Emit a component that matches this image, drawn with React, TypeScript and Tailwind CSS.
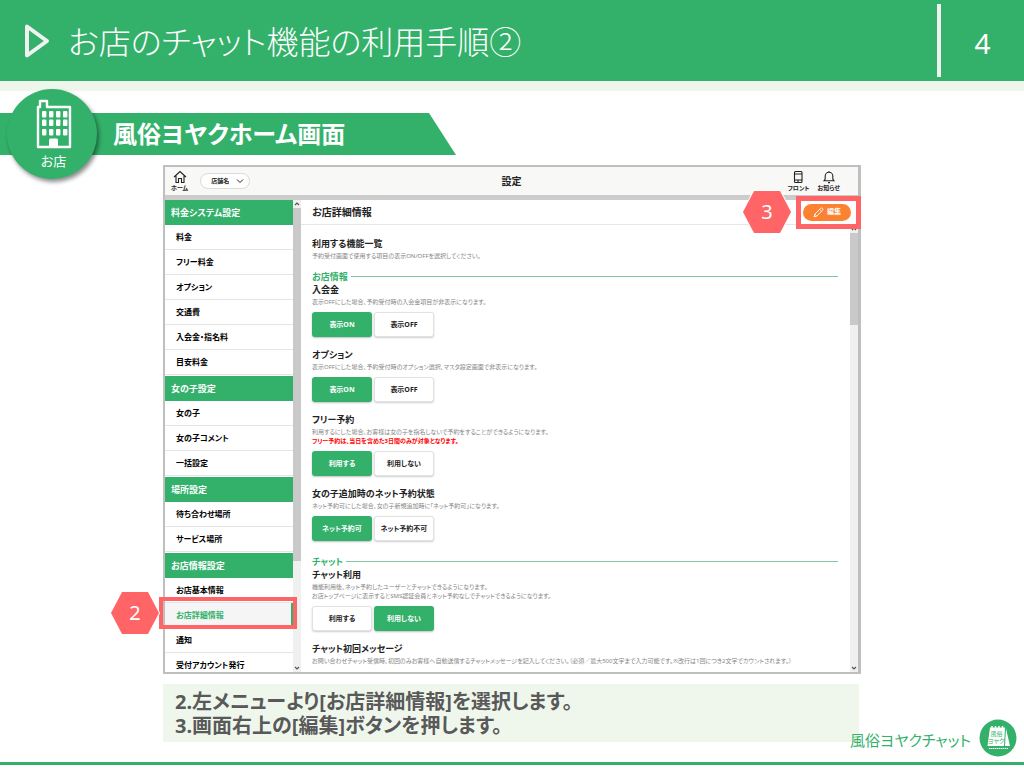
import React from "react";

const DISPLAY = "font-['Noto_Sans','Noto_Sans_CJK_JP',sans-serif] [font-feature-settings:'palt']";

type Group = { title: string; items: string[] };

const MENU: Group[] = [
  { title: "料金システム設定", items: ["料金", "フリー料金", "オプション", "交通費", "入会金・指名料", "目安料金"] },
  { title: "女の子設定", items: ["女の子", "女の子コメント", "一括設定"] },
  { title: "場所設定", items: ["待ち合わせ場所", "サービス場所"] },
  { title: "お店情報設定", items: ["お店基本情報", "お店詳細情報", "通知", "受付アカウント発行"] },
];

function Sidebar() {
  return (
    <nav className="w-[128px] shrink-0 bg-white">
      {MENU.map((g) => (
        <section key={g.title} className="pb-px">
          <h3 className="flex h-[25px] items-center bg-[#33b16b] pl-[6px] text-[9px] font-bold text-white">{g.title}</h3>
          <ul>
            {g.items.map((item) => {
              const active = item === "お店詳細情報";
              return (
                <li key={item} className="border-b border-[#e4e4e4]">
                  <a
                    href="#"
                    className={
                      active
                        ? "flex h-6 items-center border-r-2 border-[#33b16b] bg-[#f5f5f5] pl-[11px] text-[8px] font-bold text-[#33b16b]"
                        : "flex h-6 items-center pl-[11px] text-[8px] font-bold text-black"
                    }
                  >
                    {item}
                  </a>
                </li>
              );
            })}
          </ul>
        </section>
      ))}
    </nav>
  );
}

function Arrow({ up }: { up?: boolean }) {
  return (
    <svg viewBox="0 0 8 8" className="h-2 w-2 shrink-0" fill="none" stroke="#555" strokeWidth="1.2">
      <path d={up ? "M2 5 4 3l2 2" : "M2 3l2 2 2-2"} />
    </svg>
  );
}

function Choice({ options, selected }: { options: string[]; selected: number }) {
  return (
    <div className="mt-[5px] flex gap-[2px]">
      {options.map((o, i) => (
        <button
          key={o}
          type="button"
          className={
            i === selected
              ? "h-[25px] w-[60px] rounded-[3px] bg-[#33b16b] pt-px text-[7px] font-bold text-white shadow-[0_1px_2px_rgba(0,0,0,0.25)]"
              : "h-[25px] w-[60px] rounded-[3px] border border-[#e2e2e2] bg-white pt-px text-[7px] font-bold text-[#222] shadow-[0_1px_2px_rgba(0,0,0,0.2)]"
          }
        >
          {o}
        </button>
      ))}
    </div>
  );
}

function Setting(props: {
  title: string;
  notes: string[];
  warning?: string;
  options?: string[];
  selected?: number;
  first?: boolean;
}) {
  return (
    <section className={props.first ? "" : "mt-[11px]"}>
      <h4 className="text-[9px] leading-[13px] font-bold text-[#222]">{props.title}</h4>
      <div className="mt-[2px] text-[6px] leading-[9px] whitespace-nowrap text-[#858585]">
        {props.notes.map((n) => (
          <p key={n}>{n}</p>
        ))}
        {props.warning && <p className="font-bold text-[#ff0000]">{props.warning}</p>}
      </div>
      {props.options && <Choice options={props.options} selected={props.selected ?? 0} />}
    </section>
  );
}

function GroupTitle({ children }: { children: React.ReactNode }) {
  return (
    <div className="flex items-center gap-[3px]">
      <h3 className="text-[9px] leading-[13px] font-bold text-[#33b16b]">{children}</h3>
      <span className="h-px flex-1 bg-[#7fc8a2]" />
    </div>
  );
}

function Details() {
  return (
    <div className="min-w-0 flex-1 bg-white">
      <div className="flex h-[25px] items-center justify-between border-b border-[#e6e6e6] pr-[7px] pl-[11px]">
        <h2 className="text-[10px] font-bold text-[#222]">お店詳細情報</h2>
        <button
          type="button"
          className="flex h-[17px] w-12 items-center justify-center gap-[3px] rounded-full bg-[#fb8231] text-[7px] font-bold text-white"
        >
          <svg viewBox="0 0 12 12" className="h-[11px] w-[11px]" fill="none" stroke="white" strokeWidth="1">
            <path d="M1.2 10.8 2 7.8 8.3 1.5a1.3 1.3 0 0 1 2.1 2.1L4 10l-2.8.8ZM7.3 2.6l2 2M2 7.8 4 10" />
          </svg>
          編集
        </button>
      </div>
      <div className="flex">
        <div className="min-w-0 flex-1 pt-3 pr-[12px] pl-[11px]">
          <Setting first title="利用する機能一覧" notes={["予約受付画面で使用する項目の表示ON/OFFを選択してください。"]} />
          <div className="mt-[9px]">
            <GroupTitle>お店情報</GroupTitle>
            <Setting
              first
              title="入会金"
              notes={["表示OFFにした場合、予約受付時の入会金項目が非表示になります。"]}
              options={["表示ON", "表示OFF"]}
            />
            <Setting
              title="オプション"
              notes={["表示OFFにした場合、予約受付時のオプション選択、マスタ設定画面で非表示になります。"]}
              options={["表示ON", "表示OFF"]}
            />
            <Setting
              title="フリー予約"
              notes={["利用するにした場合、お客様は女の子を指名しないで予約をすることができるようになります。"]}
              warning="フリー予約は、当日を含めた3日間のみが対象となります。"
              options={["利用する", "利用しない"]}
            />
            <Setting
              title="女の子追加時のネット予約状態"
              notes={["ネット予約可にした場合、女の子新規追加時に「ネット予約可」になります。"]}
              options={["ネット予約可", "ネット予約不可"]}
            />
          </div>
          <div className="mt-[14px]">
            <GroupTitle>チャット</GroupTitle>
            <Setting
              first
              title="チャット利用"
              notes={[
                "機能利用後、ネット予約したユーザーとチャットできるようになります。",
                "お店トップページに表示するとSMS認証会員とネット予約なしでチャットできるようになります。",
              ]}
              options={["利用する", "利用しない"]}
              selected={1}
            />
            <Setting
              title="チャット初回メッセージ"
              notes={[
                "お問い合わせチャット受信時、初回のみお客様へ自動送信するチャットメッセージを記入してください。（必須／最大500文字まで入力可能です。※改行は1回につき2文字でカウントされます。）",
              ]}
            />
          </div>
        </div>
        <div className="flex h-[447px] w-2 shrink-0 flex-col justify-between bg-[#f0f0f0]">
          <div>
            <Arrow up />
            <div className="h-[92px] bg-[#c9c9c9]" />
          </div>
          <Arrow />
        </div>
      </div>
    </div>
  );
}

function AppBar() {
  return (
    <header className="grid h-[28px] grid-cols-3 items-center bg-[#f8f8f7] px-[6px] text-[6px] font-bold text-[#222]">
      <div className="flex items-center gap-3">
        <a href="#" className="flex flex-col items-center">
          <svg viewBox="0 0 14 14" className="h-[14px] w-[14px]" fill="none" stroke="#222" strokeWidth="1.1">
            <path d="M1 7 7 1.5 13 7M3 5.5V12.5H5.5V8.5H8.5V12.5H11V5.5" />
          </svg>
          <span className="leading-[8px]">ホーム</span>
        </a>
        <button
          type="button"
          className="flex h-4 w-[50px] items-center justify-between rounded-full border border-[#dcdcdc] bg-white pr-[5px] pl-[10px]"
        >
          店舗名
          <svg viewBox="0 0 8 6" className="h-[6px] w-2" fill="none" stroke="#222" strokeWidth="1">
            <path d="M1 1.5 4 4.5 7 1.5" />
          </svg>
        </button>
      </div>
      <h1 className="text-center text-[10px]">設定</h1>
      <div className="flex justify-end gap-[8px] pr-[12px]">
        <a href="#" className="flex flex-col items-center">
          <svg viewBox="0 0 12 14" className="h-[14px] w-3" fill="none" stroke="#222" strokeWidth="1.1">
            <rect x="2.5" y="1.5" width="7.5" height="11" rx="1" />
            <path d="M2.5 4H10M2.5 10H10M6 10v2.5" />
          </svg>
          <span className="leading-[8px]">フロント</span>
        </a>
        <a href="#" className="flex flex-col items-center">
          <svg viewBox="0 0 12 14" className="h-[14px] w-3" fill="none" stroke="#222" strokeWidth="1.1">
            <path d="M1 10.8h10L9.8 9V6a3.8 3.8 0 0 0-7.6 0v3L1 10.8ZM5 12.6h2M6 1v1.2" />
          </svg>
          <span className="leading-[8px]">お知らせ</span>
        </a>
      </div>
    </header>
  );
}

function Step({ n, className }: { n: number; className: string }) {
  return (
    <div className={`absolute flex h-[42px] w-12 items-center justify-center ${className}`}>
      <svg viewBox="0 0 48 42" className="absolute inset-0 h-full w-full overflow-visible">
        <path d="M11 0H37L48 21 37 42H11L0 21Z" fill="#ff6466" stroke="white" strokeWidth="2" paintOrder="stroke" />
      </svg>
      <span className="relative text-[20px] leading-none text-white">{n}</span>
    </div>
  );
}

function Building() {
  return (
    <svg viewBox="0 0 36 50" className="h-[50px] w-9" fill="none">
      <path d="M2 48V8H4V2H11V8H34V48Z" stroke="white" strokeWidth="2.4" strokeLinejoin="round" />
      <g fill="white">
        {[12, 20.5, 30].map((y) =>
          [6, 13, 20, 27].map((x) => <rect key={`${x}-${y}`} x={x} y={y} width="4.4" height="6.5" rx="1" />),
        )}
        <path d="M13 48v-7q0-1.500 1.500-1.500h6q1.500 0 1.500 1.500v7Z" />
      </g>
    </svg>
  );
}

export default function App() {
  return (
    <div className={`relative w-full overflow-hidden bg-white ${DISPLAY}`}>
      <header className="flex h-[81px] items-center bg-[#33b16b] text-white">
        <svg viewBox="0 0 26 36" className="ml-6 h-9 w-[26px]" fill="none">
          <path d="M3 3.500V32.500L23 18Z" stroke="#f1f1f1" strokeWidth="4" strokeLinejoin="round" />
        </svg>
        <h1 className="ml-[18px] flex-1 pt-[2px] text-[32px] leading-none font-light">お店のチャット機能の利用手順②</h1>
        <div className="flex h-[73px] w-[87px] items-center justify-center border-l-4 border-[#f1f1f1] pt-1 text-[28px] leading-none">4</div>
      </header>
      <div className="h-[10px] bg-[#eff7ec]" />

      <div className="relative mt-[22px] flex h-[42px] items-center">
        <svg viewBox="0 0 456 42" className="absolute top-0 left-0 h-[42px] w-[456px]">
          <path d="M0 0H429L456 42H0Z" fill="#33b16b" />
        </svg>
        <div className="absolute -top-[24px] left-[7px] z-10 flex h-[90px] w-[90px] flex-col items-center rounded-full bg-[#33b16b] pt-[10px] pl-[3px] text-white shadow-[2px_3px_4px_rgba(0,0,0,0.45)]">
          <Building />
          <span className="mt-[4px] text-[13px] leading-4">お店</span>
        </div>
        <h2 className="relative pl-[113px] text-[24px] leading-none font-bold text-white">風俗ヨヤクホーム画面</h2>
      </div>

      <main className="mx-[163px] mt-[10px]">
        <div className="relative">
          <div className="border-2 border-r-[3px] border-[#bfbfbf]">
            <AppBar />
            <div className="h-[5px] bg-[#cccccc]" />
            <div className="flex h-[472px] overflow-hidden">
              <Sidebar />
              <div className="flex w-2 shrink-0 flex-col bg-[#f0f0f0]">
                <Arrow up />
                <div className="h-[353px] bg-[#c9c9c9]" />
                <div className="flex flex-1 items-end">
                  <Arrow />
                </div>
              </div>
              <Details />
            </div>
          </div>
          <div className="absolute top-[432px] -left-[4px] h-[32px] w-[138px] border-4 border-[#ff6466]" />
          <Step n={2} className="top-[427px] -left-[52px]" />
          <div className="absolute top-[31px] right-0 h-[33px] w-[65px] border-[5px] border-[#ff6466]" />
          <Step n={3} className="top-[26px] right-[70px]" />
        </div>
        <p className="mt-[10px] mr-[2px] bg-[#eff7ec] pt-[6px] pb-[4px] pl-3 text-[20px] leading-6 font-bold text-[#595959]">
          2.左メニューより[お店詳細情報]を選択します。
          <br />
          3.画面右上の[編集]ボタンを押します。
        </p>
      </main>

      <footer className="relative -mt-[23px] flex items-center justify-end gap-2 border-b-[3px] border-[#33b16b] pr-[7px] pb-[5px]">
        <span className="pt-1 text-[15px] leading-none text-[#33b16b]">風俗ヨヤクチャット</span>
        <svg viewBox="0 0 38 38" className="h-[38px] w-[38px]">
          <circle cx="19" cy="19" r="18.500" fill="#33b16b" />
          <path d="M11 8.500H26L25 27H8.500Z" fill="white" />
          <path d="M27 9.500 31 27H26Z" fill="white" />
          <path d="M13 9v-2M16.500 9v-2M20 9v-2M23.500 9v-2" stroke="white" strokeWidth="1.4" />
          <text x="17.500" y="16.500" fontSize="6" textAnchor="middle" fill="#33b16b">風俗</text>
          <text x="17" y="23.500" fontSize="6" textAnchor="middle" fill="#33b16b">ヨヤク</text>
          <path d="M10 29.500h19" stroke="white" strokeWidth="1" strokeDasharray="1.500 .5" />
        </svg>
      </footer>
    </div>
  );
}
